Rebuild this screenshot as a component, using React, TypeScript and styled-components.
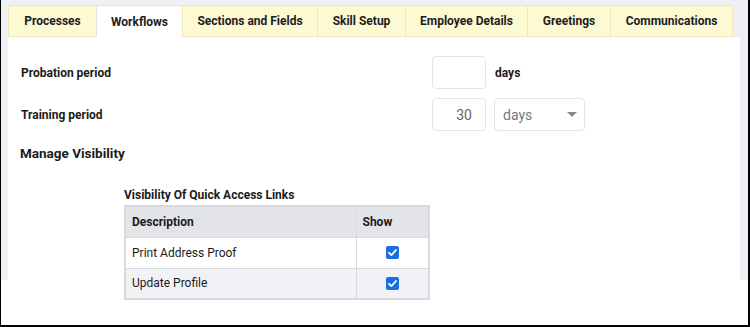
import React from "react";
import styled, { createGlobalStyle } from "styled-components";

const Global = createGlobalStyle`
  html, body { margin: 0; padding: 0; background: #fff; }
  body { font-family: Roboto, "Liberation Sans", Arial, sans-serif; color: #1b1b1b; }
  * { box-sizing: border-box; }
`;

const Frame = styled.div`
  width: 750px;
  height: 327px;
  border-left: 1px solid #000;
  border-right: 2px solid #000;
  border-bottom: 2px solid #000;
  background: #fff;
  overflow: hidden;
`;

const Backdrop = styled.div`
  height: 280px;
  background: #eef0f5;
  padding: 5px 7px 0 7px;
`;

const TabBar = styled.div`
  display: flex;
  height: 32px;
`;

const Tab = styled.div<{ $active?: boolean; $w: number }>`
  height: 32px;
  width: ${(p) => p.$w}px;
  display: flex;
  align-items: center;
  justify-content: center;
  font-size: 12px;
  font-weight: 700;
  color: #1d1d1d;
  background: ${(p) => (p.$active ? "#ffffff" : "#fcf9d3")};
  border: 1px solid ${(p) => (p.$active ? "#e2e3e8" : "#ece8b9")};
  border-bottom: ${(p) => (p.$active ? "none" : "1px solid #ece8b9")};
  border-radius: ${(p) => (p.$active ? "3px 3px 0 0" : "0")};
  margin-left: -1px;
  &:first-child { margin-left: 0; }
`;

const Panel = styled.div`
  background: #fff;
  width: 732px;
  height: 290px;
  padding: 19px 0 0 13px;
`;

const FormGrid = styled.div`
  display: grid;
  grid-template-columns: 411px auto;
  row-gap: 9px;
  align-items: center;
`;

const Label = styled.div`
  font-size: 12px;
  font-weight: 700;
`;

const Controls = styled.div`
  display: flex;
  align-items: center;
  gap: 8px;
`;

const NumBox = styled.div`
  width: 54px;
  height: 33px;
  border: 1px solid #e3e5ea;
  border-radius: 4px;
  font-size: 14px;
  color: #666;
  display: flex;
  align-items: center;
  justify-content: flex-end;
  padding-right: 13px;
`;

const Unit = styled.span`
  font-size: 12px;
  font-weight: 700;
  margin-left: 1px;
`;

const Select = styled.div`
  width: 91px;
  height: 33px;
  border: 1px solid #e3e5ea;
  border-radius: 4px;
  font-size: 14px;
  color: #777;
  display: flex;
  align-items: center;
  justify-content: space-between;
  padding: 0 7px 0 8px;
`;

const Caret = styled.span`
  width: 0;
  height: 0;
  border-left: 5px solid transparent;
  border-right: 5px solid transparent;
  border-top: 5px solid #888;
`;

const Heading = styled.div`
  font-size: 13.5px;
  font-weight: 700;
  margin: 14px 0 0 -1px;
`;

const Section = styled.div`
  margin: 27px 0 0 103px;
`;

const SubTitle = styled.div`
  font-size: 12px;
  font-weight: 700;
  margin-bottom: 3px;
`;

const Table = styled.table`
  border-collapse: collapse;
  width: 306px;
  border: 2px solid #d9dade;
  font-size: 12px;
`;

const Row = styled.tr<{ $bg: string }>`
  background: ${(p) => p.$bg};
  height: 31px;
`;

const Th = styled.th`
  text-align: left;
  font-weight: 700;
  padding: 0 6px;
  border: 1px solid #d9dade;
`;

const Td = styled.td<{ $center?: boolean }>`
  padding: 0 6px;
  border: 1px solid #d9dade;
  text-align: ${(p) => (p.$center ? "center" : "left")};
`;

const Check = () => (
  <svg width="13" height="13" viewBox="0 0 13 13" style={{ display: "block", margin: "0 auto" }}>
    <rect x="0" y="0" width="13" height="13" rx="2" fill="#1a6fe0" />
    <path d="M3 6.8 L5.4 9.1 L10 4" fill="none" stroke="#fff" strokeWidth="1.8" strokeLinecap="round" strokeLinejoin="round" />
  </svg>
);

const tabs: [string, number][] = [
  ["Processes", 89],
  ["Workflows", 87],
  ["Sections and Fields", 136],
  ["Skill Setup", 89],
  ["Employee Details", 123],
  ["Greetings", 84],
  ["Communications", 123],
];

export default function App() {
  return (
    <>
      <Global />
      <Frame>
        <Backdrop>
          <TabBar>
            {tabs.map(([t, w]) => (
              <Tab key={t} $active={t === "Workflows"} $w={w}>
                {t}
              </Tab>
            ))}
          </TabBar>
          <Panel>
            <FormGrid>
              <Label>Probation period</Label>
              <Controls>
                <NumBox />
                <Unit>days</Unit>
              </Controls>
              <Label>Training period</Label>
              <Controls>
                <NumBox>30</NumBox>
                <Select>
                  <span>days</span>
                  <Caret />
                </Select>
              </Controls>
            </FormGrid>
            <Heading>Manage Visibility</Heading>
            <Section>
              <SubTitle>Visibility Of Quick Access Links</SubTitle>
              <Table>
                <tbody>
                  <Row $bg="#e3e4e8">
                    <Th style={{ width: 231 }}>Description</Th>
                    <Th>Show</Th>
                  </Row>
                  <Row $bg="#ffffff">
                    <Td>Print Address Proof</Td>
                    <Td $center>
                      <Check />
                    </Td>
                  </Row>
                  <Row $bg="#f1f2f6">
                    <Td>Update Profile</Td>
                    <Td $center>
                      <Check />
                    </Td>
                  </Row>
                </tbody>
              </Table>
            </Section>
          </Panel>
        </Backdrop>
      </Frame>
    </>
  );
}
